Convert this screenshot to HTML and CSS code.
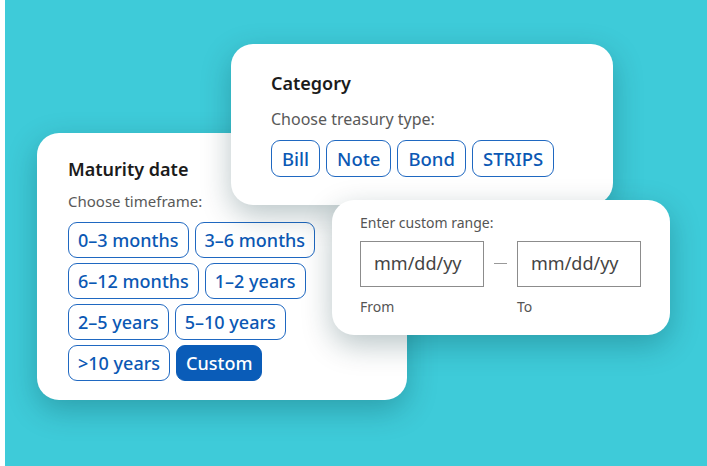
FILE: index.html
```
<!DOCTYPE html>
<html>
<head>
<meta charset="utf-8">
<link rel="stylesheet" href="styles.css">
</head>
<body>
<div class="stage">
  <section class="card maturity">
    <h2 class="title">Maturity date</h2>
    <p class="hint">Choose timeframe:</p>
    <div class="chips">
      <div class="row"><span class="chip">0–3 months</span><span class="chip">3–6 months</span></div>
      <div class="row"><span class="chip">6–12 months</span><span class="chip">1–2 years</span></div>
      <div class="row"><span class="chip">2–5 years</span><span class="chip">5–10 years</span></div>
      <div class="row"><span class="chip">&gt;10 years</span><span class="chip active">Custom</span></div>
    </div>
  </section>

  <section class="card category">
    <h2 class="title">Category</h2>
    <p class="hint">Choose treasury type:</p>
    <div class="row big"><span class="chip">Bill</span><span class="chip">Note</span><span class="chip">Bond</span><span class="chip">STRIPS</span></div>
  </section>

  <section class="card range">
    <p class="small">Enter custom range:</p>
    <div class="inputs">
      <div class="field">
        <div class="box">mm/dd/yy</div>
        <span class="small label">From</span>
      </div>
      <div class="dash"></div>
      <div class="field">
        <div class="box">mm/dd/yy</div>
        <span class="small label">To</span>
      </div>
    </div>
  </section>
</div>
</body>
</html>
```
FILE: styles.css
```
* { box-sizing: border-box; }
html, body { margin: 0; padding: 0; background: #fff; }
body { font-family: "Noto Sans", "Open Sans", sans-serif; }

.stage {
  position: relative;
  margin-left: 5px;
  width: 702px;
  height: 466px;
  background: #3ecbd9;
  overflow: hidden;
}

.card {
  position: absolute;
  background: #fff;
  border-radius: 22px;
  box-shadow: 0 10px 30px rgba(0, 45, 55, 0.28);
}

.maturity {
  left: 32px; top: 133px; width: 370px; height: 267px;
  padding: 24px 31px;
}
.category {
  left: 226px; top: 44px; width: 382px; height: 161px;
  padding: 27px 40px;
}
.range {
  left: 327px; top: 200px; width: 338px; height: 135px;
  padding: 13px 28px;
}

.title {
  margin: 0;
  font-size: 18px;
  line-height: 24px;
  font-weight: 600;
  color: #1b1b1b;
}
.hint {
  margin: 10px 0 0;
  font-size: 15px;
  line-height: 21px;
  color: #595959;
}
.category .hint { margin-top: 14px; font-size: 16px; }

.chips { margin-top: 10px; display: flex; flex-direction: column; gap: 5px; }
.row { display: flex; gap: 6px; }
.row.big { margin-top: 10px; gap: 6px; }

.chip {
  display: inline-flex;
  align-items: center;
  height: 36px;
  padding: 0 9px 1px;
  border: 1.5px solid #1f68c1;
  border-radius: 9px;
  color: #0b58b4;
  font-size: 18px;
  font-weight: 500;
  white-space: nowrap;
}
.row.big .chip { height: 37px; padding: 0 10px 1px; font-size: 18.5px; }
.chip.active {
  background: #0a5cb8;
  border-color: #0a5cb8;
  color: #fff;
}

.small {
  margin: 0;
  font-size: 14px;
  line-height: 19px;
  color: #555;
}
.inputs {
  margin-top: 9px;
  display: flex;
  align-items: flex-start;
}
.field { display: flex; flex-direction: column; }
.box {
  width: 124px;
  height: 46px;
  border: 1px solid #8c8c8c;
  display: flex;
  align-items: center;
  padding-left: 13px;
  padding-bottom: 2px;
  font-size: 18px;
  color: #444;
}
.label { margin-top: 10px; }
.dash {
  width: 13px;
  height: 1px;
  background: #999;
  margin: 22px 10px 0;
}
```
